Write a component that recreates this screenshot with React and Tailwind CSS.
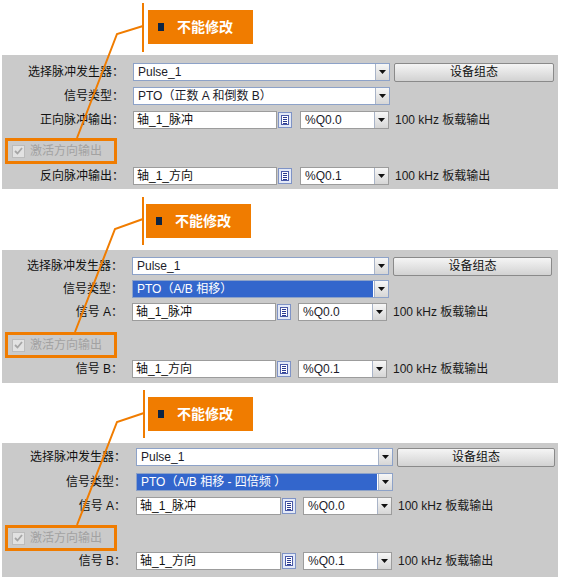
import React from "react";

const font = "font-['Liberation_Sans','Noto_Sans_CJK_SC',sans-serif]";

function Arrow() {
  return (
    <div className="w-[14px] shrink-0 border-l border-[#a9b4c8] bg-linear-to-b from-[#f7f7f7] to-[#d6d6d6] flex items-center justify-center">
      <svg width="7" height="4" viewBox="0 0 7 4">
        <path d="M0 0H7L3.5 4Z" fill="#111" />
      </svg>
    </div>
  );
}

function Combo({ w, text, selected, blue }) {
  return (
    <div
      className={`flex h-[18px] ${w} border ${
        blue ? "border-[#8da2c8]" : "border-[#9c9c9c]"
      } bg-white`}
    >
      <div
        className={`flex-1 flex items-center pl-[4px] text-[12px] whitespace-nowrap ${
          selected ? "bg-[#3366cc] text-white mr-[1px]" : "text-[#1c1c2a]"
        }`}
      >
        {text}
      </div>
      <Arrow />
    </div>
  );
}

function ListIcon() {
  return (
    <svg width="14" height="16" viewBox="0 0 14 16" className="shrink-0">
      <rect x="0.5" y="0.5" width="13" height="15" fill="#e3e9f7" stroke="#7f93c6" />
      <rect x="3.5" y="3.5" width="7" height="9" fill="#fff" stroke="#4a5aa8" />
      <path d="M5 5.5H9M5 7.5H9M5 9.5H9M5 11.5H9" stroke="#2b3a8f" strokeWidth="1" />
    </svg>
  );
}

function Label({ w, children }) {
  return (
    <div className={`${w} shrink-0 pr-[5px] text-right text-[12px] text-[#111] whitespace-nowrap`}>
      {children}
    </div>
  );
}

function Panel({ p }) {
  return (
    <div className={`relative ${p.height} w-[562px]`}>
      <svg
        className="absolute inset-0 z-10 pointer-events-none"
        width="562"
        height="194"
      >
        <line x1={p.vx} y1={p.vy1} x2={p.vx} y2={p.vy2} stroke="#f07c00" strokeWidth="2" />
        <polyline points={p.diag} fill="none" stroke="#f07c00" strokeWidth="2" />
      </svg>
      <div className={p.topArea}>
        <div className={`${p.box} w-[105px] h-[34px] bg-[#f07c00] flex items-center pl-[10px]`}>
          <div className="w-[6px] h-[8px] bg-[#0c2444]" />
          <span className="ml-[13px] text-[14px] font-bold text-white">不能修改</span>
        </div>
      </div>
      <div className={`ml-[2px] w-[556px] ${p.gray} bg-[#cacaca] flex flex-col ${p.pad}`}>
        {/* row 1 */}
        <div className="flex items-center h-[18px]">
          <Label w={p.labelW}>选择脉冲发生器：</Label>
          <div className={`flex items-center ${p.ctrlMl}`}>
            <Combo w="w-[257px]" text="Pulse_1" blue />
            <div className={`${p.btnW} ml-[4px] h-[19px] border border-[#8a8a8a] rounded-[2px] bg-linear-to-b from-[#f5f5f5] to-[#d2d2d2] flex items-center justify-center text-[12px] text-[#111]`}>
              设备组态
            </div>
          </div>
        </div>
        {/* row 2 */}
        <div className={`flex items-center h-[18px] ${p.g1}`}>
          <Label w={p.labelW}>信号类型：</Label>
          <div className={p.ctrlMl}>
            <Combo w="w-[257px]" text={p.type} selected={p.selected} blue />
          </div>
        </div>
        {/* row 3 */}
        <div className={`flex items-center h-[18px] ${p.g2}`}>
          <Label w={p.labelW}>{p.l3}</Label>
          <div className={`flex items-center ${p.ctrlMl}`}>
            <div className={`${p.txtW} h-[18px] border border-[#9c9c9c] bg-white flex items-center pl-[3px] text-[12px] text-[#111]`}>
              轴_1_脉冲
            </div>
            <div className="ml-[1px]">
              <ListIcon />
            </div>
            <div className={p.qMl}>
              <Combo w="w-[89px]" text="%Q0.0" />
            </div>
            <span className="ml-[6px] text-[12px] text-[#1a1a1a] whitespace-nowrap">100 kHz 板载输出</span>
          </div>
        </div>
        {/* checkbox */}
        <div className={`ml-[3px] w-[112px] h-[26px] border-[3px] border-[#f07c00] flex items-center pl-[4px] ${p.g3}`}>
          <div className="w-[13px] h-[13px] border border-[#bcbcbc] bg-[#e2e2e2] flex items-center justify-center">
            <svg width="9" height="8" viewBox="0 0 9 8">
              <path d="M1 4L3.5 6.5L8 1" fill="none" stroke="#a6a6a6" strokeWidth="1.8" />
            </svg>
          </div>
          <span className="ml-[5px] text-[12px] text-[#a2a2a2] whitespace-nowrap">激活方向输出</span>
        </div>
        {/* row 5 */}
        <div className={`flex items-center h-[18px] ${p.g4}`}>
          <Label w={p.labelW}>{p.l5}</Label>
          <div className={`flex items-center ${p.ctrlMl}`}>
            <div className={`${p.txtW} h-[18px] border border-[#9c9c9c] bg-white flex items-center pl-[3px] text-[12px] text-[#111]`}>
              轴_1_方向
            </div>
            <div className="ml-[1px]">
              <ListIcon />
            </div>
            <div className={p.qMl}>
              <Combo w="w-[89px]" text="%Q0.1" />
            </div>
            <span className="ml-[6px] text-[12px] text-[#1a1a1a] whitespace-nowrap">100 kHz 板载输出</span>
          </div>
        </div>
      </div>
    </div>
  );
}

const panels = [
  {
    height: "h-[189px]",
    topArea: "h-[55px] pt-[10px]",
    box: "ml-[148px]",
    gray: "h-[134px]",
    pad: "pt-[8px]",
    g1: "mt-[6px]",
    g2: "mt-[6px]",
    g3: "mt-[9px]",
    g4: "mt-[3px]",
    labelW: "w-[127px]",
    ctrlMl: "ml-[4px]",
    btnW: "w-[160px]",
    txtW: "w-[144px]",
    qMl: "ml-[8px]",
    vx: 143,
    vy1: 3,
    vy2: 52,
    diag: "143,26 117,34 77,138",
    type: "PTO（正数 A 和倒数 B）",
    selected: false,
    l3: "正向脉冲输出：",
    l5: "反向脉冲输出：",
  },
  {
    height: "h-[194px]",
    topArea: "h-[61px] pt-[15px]",
    box: "ml-[146px]",
    gray: "h-[133px]",
    pad: "pt-[7px]",
    g1: "mt-[5px]",
    g2: "mt-[5px]",
    g3: "mt-[11px]",
    g4: "mt-[2px]",
    labelW: "w-[126px]",
    ctrlMl: "ml-[4px]",
    btnW: "w-[159px]",
    txtW: "w-[144px]",
    qMl: "ml-[7px]",
    vx: 143,
    vy1: 8,
    vy2: 56,
    diag: "143,30 115,40 75,143",
    type: "PTO（A/B 相移）",
    selected: true,
    l3: "信号 A：",
    l5: "信号 B：",
  },
  {
    height: "h-[194px]",
    topArea: "h-[60px] pt-[14px]",
    box: "ml-[148px]",
    gray: "h-[134px]",
    pad: "pt-[5px]",
    g1: "mt-[7px]",
    g2: "mt-[6px]",
    g3: "mt-[10px]",
    g4: "mt-[1px]",
    labelW: "w-[129px]",
    ctrlMl: "ml-[5px]",
    btnW: "w-[158px]",
    txtW: "w-[145px]",
    qMl: "ml-[7px]",
    vx: 144,
    vy1: 7,
    vy2: 55,
    diag: "144,30 117,39 77,142",
    type: "PTO（A/B 相移 - 四倍频 ）",
    selected: true,
    l3: "信号 A：",
    l5: "信号 B：",
  },
];

export default function App() {
  return (
    <div className={`w-[562px] h-[577px] bg-white overflow-hidden ${font}`}>
      {panels.map((p, i) => (
        <Panel key={i} p={p} />
      ))}
    </div>
  );
}
